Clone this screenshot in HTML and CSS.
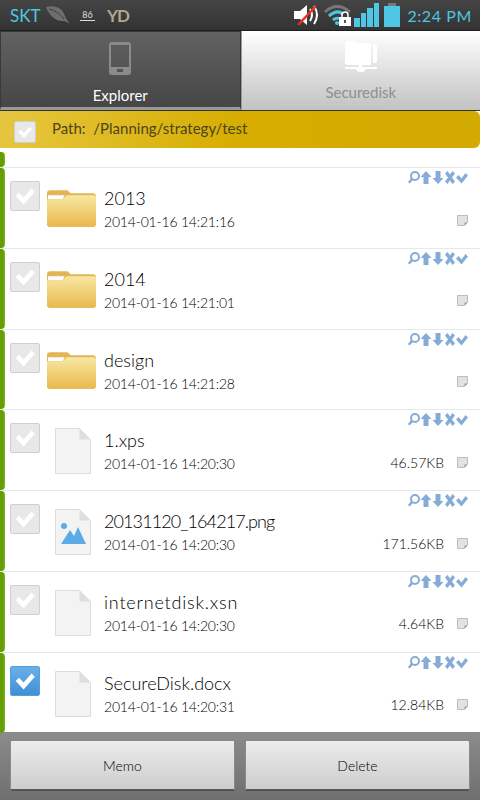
FILE: index.html
```html
<!DOCTYPE html>
<html lang="en">
<head>
    <meta charset="UTF-8">
    <meta name="viewport" content="width=device-width, initial-scale=1.0">
    <title>Explorer</title>
    <link rel="stylesheet" href="styles.css">
</head>
<body>
    <svg class="defs" width="0" height="0">
        <symbol id="folder" viewBox="0 0 50 37">
            <path d="M0 3q0-3 3-3h17q2 0 3 2l1 1h23q3 0 3 3v28q0 3-3 3H3q-3 0-3-3z" fill="#e3b556"/>
            <path d="M1 5h17l-2 4H1z" fill="#fff"/>
            <path d="M0 9 16 9l4-4h28q2 0 2 2v27q0 3-3 3H3q-3 0-3-3z" fill="url(#folderFill)"/>
            <linearGradient id="folderFill" x1="0" y1="0" x2="0" y2="1">
                <stop offset="0" stop-color="#f7e8a4"/>
                <stop offset="1" stop-color="#e9b84c"/>
            </linearGradient>
        </symbol>
        <symbol id="file" viewBox="0 0 36 46">
            <path d="M.5.5h24l11 11v34H.5z" fill="#f3f3f3" stroke="#dcdcdc"/>
            <path d="M24.5.5v11h11z" fill="#dedede"/>
        </symbol>
        <symbol id="tools" viewBox="0 0 60 13">
            <g fill="#85acd6">
                <path d="M7 0a5 5 0 1 1 0 10a5 5 0 1 1 0-10zM7 2a3 3 0 1 0 0 6a3 3 0 1 0 0-6z"/>
                <path d="M0 11 3.500 6.500l2 2L1.500 12.500z"/>
                <path d="M18 0l5.500 6H20.500v7h-5V6H12.500z"/>
                <path d="M30 13l5.500-6H32.500V0h-5v7H24.500z"/>
                <path d="M37 2.500 39.500 0 42 3.500 44.500 0 47 2.500 44 6.500l3 4L44.500 13 42 9.500 39.500 13 37 10.500l3-4z"/>
                <path d="M48 6.500 50.500 4l3 3.500L57.500 2 60 4.500 53.500 12.500z"/>
            </g>
        </symbol>
        <symbol id="note" viewBox="0 0 11 11">
            <path d="M.5.500h10v7l-3 3h-7z" fill="#e2e2e2" stroke="#bdbdbd"/>
            <path d="M7.500 10.500v-3h3z" fill="#9d9d9d"/>
        </symbol>
        <symbol id="tick" viewBox="0 0 30 30">
            <path d="M5 15l3.500-3.500 5 5L22 7l3.500 3.500L13.500 24z" fill="#fff"/>
        </symbol>
    </svg>

    <div class="status-bar">
        <span class="carrier">SKT</span>
        <svg class="leaf" width="24" height="18" viewBox="0 0 24 18"><path d="M0 1c8-2 16 0 19 9 1 3 3 5 5 8-3-2-5-3-7-3C9 15 3 9 0 1z" fill="#6e6e6e"/><path d="M3 3q9 2 15 10" fill="none" stroke="#3d3d3d"/></svg>
        <span class="small-num">86</span>
        <span class="initials">YD</span>
        <span class="status-gap"></span>
        <svg class="speaker" width="25" height="20" viewBox="0 0 25 20"><path d="M0 6h6l7-6v20l-7-6H0z" fill="#fff"/><path d="M16 4q4 6 0 12M20 1q6 9 0 18" fill="none" stroke="#fff" stroke-width="2"/><path d="M4 20 22 1" stroke="#e8321e" stroke-width="2.500"/></svg>
        <svg class="wifi" width="27" height="22" viewBox="0 0 27 22"><path d="M1 8q12-11 25 0" fill="none" stroke="#777" stroke-width="3"/><path d="M5 12q8-7 14-2M9 16q4-3 6-1" fill="none" stroke="#4fc6e3" stroke-width="3"/><circle cx="13" cy="19" r="2" fill="#4fc6e3"/><path d="M15 13h12v9H15z" fill="#fff"/><path d="M18 13v-2a3 3 0 0 1 6 0v2" fill="none" stroke="#fff" stroke-width="1.500"/><path d="M20 16h2v3h-2z" fill="#555"/></svg>
        <div class="signal"><i class="s1"></i><i class="s2"></i><i class="s3"></i><i class="s4"></i></div>
        <div class="battery"></div>
        <span class="clock">2:24 PM</span>
    </div>

    <div class="tabs">
        <div class="tab tab-on">
            <svg width="22" height="33" viewBox="0 0 22 33"><path d="M3 0h16q3 0 3 3v27q0 3-3 3H3q-3 0-3-3V3q0-3 3-3zM2 3v22h18V3zM8 27v3h6v-3z" fill="#8b8b8b" fill-rule="evenodd"/></svg>
            <span>Explorer</span>
        </div>
        <div class="tab tab-off">
            <svg width="32" height="31" viewBox="0 0 32 31"><path d="M0 3q0-3 3-3h8l2 2h11q2 0 2 2v20H3q-3 0-3-3z" fill="#fff"/><path d="M28 3h1q3 0 3 2v15q0 2-3 2h-1z" fill="#fff"/><path d="M14 24h3v2h15v2H21q-1 3-5 3t-5-3H0v-2h14z" fill="#fff"/></svg>
            <span>Securedisk</span>
        </div>
    </div>

    <div class="path-bar">
        <div class="check"><svg><use href="#tick"/></svg></div>
        <span class="path-text">Path:&nbsp; /Planning/strategy/test</span>
    </div>

    <div class="list">
        <div class="row-top"><div class="mark"></div></div>

        <div class="row">
            <div class="mark"></div>
            <div class="check"><svg><use href="#tick"/></svg></div>
            <div class="thumb"><svg class="ic-folder"><use href="#folder"/></svg></div>
            <div class="info"><div class="name">2013</div><div class="date">2014-01-16 14:21:16</div></div>
            <div class="side"><svg class="ic-tools"><use href="#tools"/></svg><div class="meta"><svg class="ic-note"><use href="#note"/></svg></div></div>
        </div>

        <div class="row">
            <div class="mark"></div>
            <div class="check"><svg><use href="#tick"/></svg></div>
            <div class="thumb"><svg class="ic-folder"><use href="#folder"/></svg></div>
            <div class="info"><div class="name">2014</div><div class="date">2014-01-16 14:21:01</div></div>
            <div class="side"><svg class="ic-tools"><use href="#tools"/></svg><div class="meta"><svg class="ic-note"><use href="#note"/></svg></div></div>
        </div>

        <div class="row">
            <div class="mark"></div>
            <div class="check"><svg><use href="#tick"/></svg></div>
            <div class="thumb"><svg class="ic-folder"><use href="#folder"/></svg></div>
            <div class="info"><div class="name">design</div><div class="date">2014-01-16 14:21:28</div></div>
            <div class="side"><svg class="ic-tools"><use href="#tools"/></svg><div class="meta"><svg class="ic-note"><use href="#note"/></svg></div></div>
        </div>

        <div class="row">
            <div class="mark"></div>
            <div class="check"><svg><use href="#tick"/></svg></div>
            <div class="thumb"><svg class="ic-file"><use href="#file"/></svg></div>
            <div class="info"><div class="name">1.xps</div><div class="date">2014-01-16 14:20:30</div></div>
            <div class="side"><svg class="ic-tools"><use href="#tools"/></svg><div class="meta"><span>46.57KB</span><svg class="ic-note"><use href="#note"/></svg></div></div>
        </div>

        <div class="row">
            <div class="mark"></div>
            <div class="check"><svg><use href="#tick"/></svg></div>
            <div class="thumb">
                <svg class="ic-file" viewBox="0 0 36 46">
                    <use href="#file"/>
                    <circle cx="9" cy="17" r="3" fill="#5dabe6"/>
                    <path d="M6 35 15 21l4 6 4-9 8 17z" fill="#5dabe6"/>
                </svg>
            </div>
            <div class="info"><div class="name name-tight">20131120_164217.png</div><div class="date">2014-01-16 14:20:30</div></div>
            <div class="side"><svg class="ic-tools"><use href="#tools"/></svg><div class="meta"><span>171.56KB</span><svg class="ic-note"><use href="#note"/></svg></div></div>
        </div>

        <div class="row">
            <div class="mark"></div>
            <div class="check"><svg><use href="#tick"/></svg></div>
            <div class="thumb"><svg class="ic-file"><use href="#file"/></svg></div>
            <div class="info"><div class="name name-wide">internetdisk.xsn</div><div class="date">2014-01-16 14:20:30</div></div>
            <div class="side"><svg class="ic-tools"><use href="#tools"/></svg><div class="meta"><span>4.64KB</span><svg class="ic-note"><use href="#note"/></svg></div></div>
        </div>

        <div class="row">
            <div class="mark"></div>
            <div class="check check-on"><svg><use href="#tick"/></svg></div>
            <div class="thumb"><svg class="ic-file"><use href="#file"/></svg></div>
            <div class="info"><div class="name">SecureDisk.docx</div><div class="date">2014-01-16 14:20:31</div></div>
            <div class="side"><svg class="ic-tools"><use href="#tools"/></svg><div class="meta"><span>12.84KB</span><svg class="ic-note"><use href="#note"/></svg></div></div>
        </div>
    </div>

    <div class="bottom-bar">
        <button class="btn">Memo</button>
        <button class="btn">Delete</button>
    </div>
</body>
</html>
```

FILE: styles.css
```css
* {
  box-sizing: border-box;
}

body {
  margin: 0;
  width: 480px;
  height: 800px;
  overflow: hidden;
  background-color: white;
  font-family: "Lato", "Noto Sans", sans-serif;
  color: #000;
}

.defs {
  display: block;
  height: 0;
}

/* status bar */
.status-bar {
  display: flex;
  align-items: center;
  height: 31px;
  padding-left: 10px;
  padding-right: 8px;
  background: linear-gradient(#454545, #333);
  border-bottom: 1px solid #1c1c1c;
}

.carrier {
  font-size: 17px;
  color: #4fc6e3;
  width: 36px;
}

.leaf {
  margin-right: 10px;
}

.small-num {
  width: 15px;
  font-size: 9px;
  line-height: 9px;
  text-align: center;
  color: #ddd;
  border-bottom: 1px solid #ddd;
  padding-bottom: 1px;
  margin-right: 12px;
}

.initials {
  font-size: 17px;
  font-weight: bold;
  letter-spacing: -1px;
  color: #b5a48f;
}

.status-gap {
  flex: 1;
}

.speaker {
  margin-right: 5px;
}

.wifi {
  margin-right: 3px;
}

.signal {
  display: flex;
  align-items: flex-end;
  gap: 1px;
  height: 24px;
  margin-right: 5px;
}

.signal i {
  display: block;
  width: 5.500px;
  background-color: #4fc6e3;
}

.s1 { height: 9px; }
.s2 { height: 14px; }
.s3 { height: 19px; }
.s4 { height: 24px; }

.battery {
  width: 16px;
  height: 21px;
  margin-top: 3px;
  margin-right: 7px;
  background-color: #4fc6e3;
}

.battery::before {
  content: "";
  display: block;
  width: 8px;
  height: 3px;
  margin: -3px auto 0;
  background-color: #777;
}

.clock {
  font-size: 16px;
  color: #4fc6e3;
  letter-spacing: 0.6px;
}

/* tabs */
.tabs {
  display: flex;
  height: 80px;
  border-bottom: 1px solid #333;
}

.tab {
  flex: 1;
  display: flex;
  flex-direction: column;
  align-items: center;
  padding-top: 10px;
  font-size: 15px;
}

.tab span {
  margin-top: 11px;
}

.tab-on {
  background: linear-gradient(#626262, #464646);
  border: 1px solid #3a3a3a;
  border-bottom: 3px solid #999;
  color: white;
}

.tab-off {
  background: linear-gradient(#fff, #c2c2c2);
  border-left: 1px solid #999;
  color: #8f8f8f;
}

/* path */
.path-bar {
  display: flex;
  align-items: center;
  gap: 16px;
  height: 37px;
  padding-left: 14px;
  border-radius: 0 6px 6px 0;
  background: linear-gradient(to right, #e6c63f, #d6ad00 50%, #d2aa00);
  font-size: 15px;
  color: #4d431a;
}

.path-bar .check {
  width: 22px;
  height: 22px;
  margin-top: 5px;
}

.path-text {
  margin-top: -4px;
}

.check {
  flex: none;
  width: 30px;
  height: 30px;
  margin-top: 13px;
  border: 1px solid #cfcfcf;
  border-radius: 2px;
  background-color: #e8e8e8;
}

.check svg {
  display: block;
  width: 100%;
  height: 100%;
}

.check-on {
  background: linear-gradient(#6bb0e8, #3f8fd6);
  border-color: #5a9dd8;
}

/* list */
.list {
  height: 584px;
}

.mark {
  flex: none;
  width: 5px;
  height: 100%;
  border-radius: 0 4px 4px 0;
  background: linear-gradient(to right, #649f00 3px, #7fb52c);
}

.row-top {
  height: 20px;
  padding-top: 4px;
  border-bottom: 1px solid #e8e8e8;
}

.row {
  display: flex;
  height: 80.800px;
  padding-right: 12px;
  border-bottom: 1px solid #e8e8e8;
}

.row .check {
  margin-left: 5px;
}

.thumb {
  flex: none;
  width: 49px;
  margin-left: 7px;
  margin-right: 8px;
  display: flex;
  justify-content: center;
}

.ic-folder {
  width: 50px;
  height: 37px;
  margin-top: 22px;
}

.ic-file {
  width: 36px;
  height: 46px;
  margin-top: 18px;
  margin-left: 3px;
}

.info {
  flex: 1;
  padding-top: 18px;
  font-weight: 300;
}

.name {
  font-size: 18px;
  line-height: 24px;
}

.name-tight {
  letter-spacing: -0.9px;
}

.name-wide {
  letter-spacing: 0.8px;
}

.date {
  font-size: 14px;
  line-height: 18px;
  margin-top: 3px;
  letter-spacing: -0.2px;
}

.side {
  display: flex;
  flex-direction: column;
  align-items: flex-end;
  padding-top: 3px;
}

.ic-tools {
  width: 60px;
  height: 13px;
}

.meta {
  display: flex;
  align-items: center;
  gap: 13px;
  height: 18px;
  margin-top: 27px;
  font-size: 14px;
  font-weight: 300;
}

.ic-note {
  width: 11px;
  height: 11px;
}

/* bottom */
.bottom-bar {
  display: flex;
  gap: 10px;
  height: 68px;
  padding: 8px 10px 9px;
  background: linear-gradient(#8c8c8c, #6f6f6f);
}

.btn {
  flex: 1;
  border: 1px solid #8a8a8a;
  border-bottom: 2px solid #555;
  border-radius: 2px;
  background: linear-gradient(#ececec, #cdcdcd);
  font-family: inherit;
  font-size: 14px;
  font-weight: 300;
  color: #000;
}
```
